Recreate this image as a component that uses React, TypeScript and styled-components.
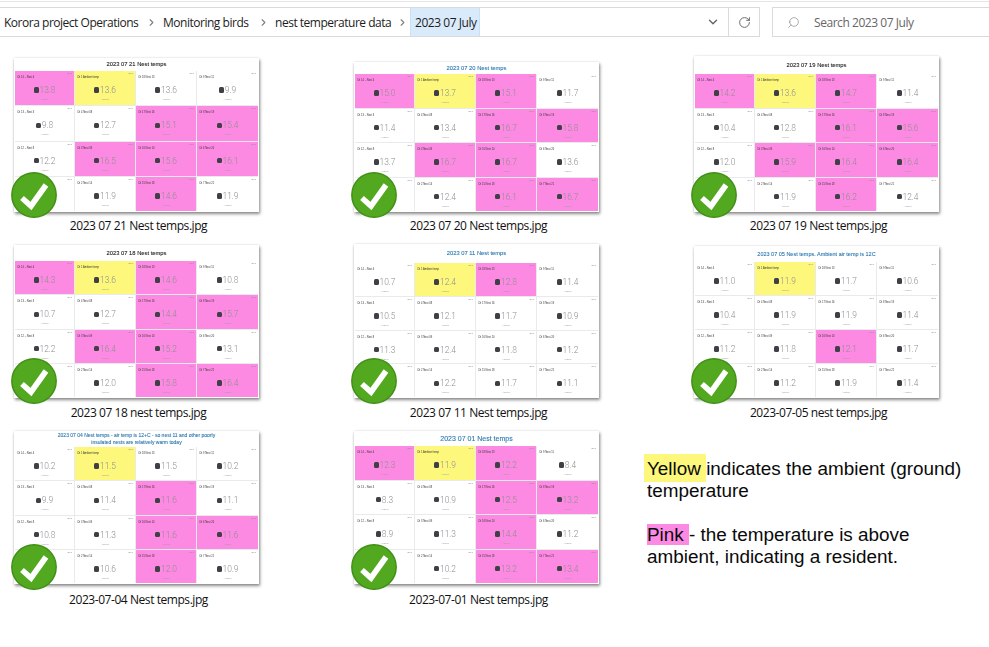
import React from "react";
import styled, { createGlobalStyle } from "styled-components";
import { ChevronDown, ChevronRight, RotateCw, Search } from "lucide-react";

const Global = createGlobalStyle`
  html, body { margin: 0; padding: 0; background: #fff; }
  body { width: 989px; height: 647px; overflow: hidden; font-family: "Open Sans", "Liberation Sans", sans-serif; }
`;

const Page = styled.div`
  width: 989px;
  height: 647px;
  background: #fff;
`;

const Header = styled.header`
  display: flex;
  height: 30px;
  margin-top: 1px;
  padding-top: 5px;
  border-top: 1px solid #e6e6e6;
`;

const AddressBar = styled.div`
  display: flex;
  align-items: stretch;
  width: 760px;
  box-sizing: border-box;
  border: 1px solid #dadada;
  border-left: 0;
`;

const Crumbs = styled.nav`
  display: flex;
  align-items: center;
  flex: 1;
  padding-left: 4px;
`;

const Crumb = styled.span<{ $w: number }>`
  width: ${(p) => p.$w}px;
  font-size: 12px;
  letter-spacing: -0.48px;
  color: #1c1c1c;
  white-space: nowrap;
`;

const Sep = styled.span`
  display: flex;
  justify-content: center;
  width: 23px;
  color: #7f7f7f;
`;

const CurrentCrumb = styled.span`
  display: flex;
  align-items: center;
  align-self: stretch;
  box-sizing: border-box;
  width: 70px;
  margin-left: -4px;
  padding-left: 4px;
  font-size: 12px;
  letter-spacing: -0.45px;
  color: #1c1c1c;
  white-space: nowrap;
  background: #d9ebfb;
  border: 1px solid #c6e2f8;
  border-width: 0 1px;
`;

const DropButton = styled.span`
  display: flex;
  align-items: center;
  justify-content: center;
  width: 30px;
  color: #666;
`;

const RefreshButton = styled.span`
  display: flex;
  align-items: center;
  justify-content: center;
  width: 30px;
  color: #6a6a6a;
  border-left: 1px solid #dadada;
`;

const SearchBox = styled.div`
  display: flex;
  align-items: center;
  flex: 1;
  margin-left: 12px;
  padding-left: 14px;
  border: 1px solid #dadada;
  border-right: 0;
  font-size: 12px;
  letter-spacing: -0.45px;
  color: #666;
`;

const SearchGlyph = styled.span`
  display: flex;
  width: 27px;
  color: #777;
  transform: scaleX(-1);
  justify-content: flex-end;
`;

const Gallery = styled.main`
  display: grid;
  grid-template-columns: repeat(3, 340px);
  grid-auto-rows: 187px;
  padding: 10px 0 0 14px;
`;

const Item = styled.figure`
  display: flex;
  flex-direction: column;
  justify-content: flex-end;
  width: 245px;
  margin: 0;
`;

const Thumb = styled.div<{ $h: number }>`
  position: relative;
  display: flex;
  flex-direction: column;
  height: ${(p) => p.$h}px;
  background: #fff;
  box-shadow: 1px 2px 3px rgba(0, 0, 0, 0.45), 0 0 2px rgba(0, 0, 0, 0.12);
`;

const Sheet = styled.div`
  display: flex;
  flex-direction: column;
  height: 100%;
  filter: blur(0.35px);
`;

const Title = styled.div<{ $h: number; $size: number; $blue: boolean }>`
  display: flex;
  align-items: center;
  justify-content: center;
  flex: 0 0 ${(p) => p.$h}px;
  padding: 0 42px;
  text-align: center;
  font: 400 ${(p) => p.$size}px/7px "Liberation Sans", sans-serif;
  color: ${(p) => (p.$blue ? "#2b78b0" : "#222")};
  -webkit-text-stroke: 0.1px currentColor;
  white-space: ${(p) => (p.$size < 5.2 ? "normal" : "nowrap")};
`;

const CellGrid = styled.div`
  flex: 1;
  display: grid;
  grid-template-columns: 58fr 59fr 59fr 60fr;
  grid-template-rows: repeat(4, 1fr);
  gap: 1px;
  margin: 0 1px 1px;
  background: #e9eaec;
`;

const Cell = styled.div<{ $tone: string }>`
  position: relative;
  display: flex;
  flex-direction: column;
  align-items: center;
  min-width: 0;
  background: ${(p) => (p.$tone === "p" ? "#fd8ae2" : p.$tone === "y" ? "#fdf77c" : "#fff")};
`;

const CellName = styled.span`
  align-self: flex-start;
  margin: 5px 0 0 2px;
  font: 400 2.6px/4px "Liberation Sans", sans-serif;
  color: #333;
  white-space: nowrap;
`;

const CellMeta = styled.span`
  position: absolute;
  top: 1px;
  right: 2px;
  font: 400 2.5px/3px "Liberation Sans", sans-serif;
  color: #888;
`;

const Reading = styled.div`
  display: flex;
  align-items: center;
  gap: 0.5px;
  margin-top: 4px;
  font: 300 8.4px/12px Roboto, sans-serif;
  color: #8f8f8f;
`;

const Sensor = styled.i`
  width: 5.5px;
  height: 5.5px;
  border-radius: 1.5px;
  background: #3f3f46;
`;

const Caption = styled.span`
  margin-top: 2px;
  font: 400 2.5px/4px "Liberation Sans", sans-serif;
  color: #999;
`;

const Check = styled.svg`
  position: absolute;
  left: -3px;
  bottom: -6px;
  width: 46px;
  height: 46px;
`;

const Label = styled.figcaption<{ $gap: number }>`
  margin-top: ${(p) => p.$gap}px;
  height: 16px;
  padding-left: 4px;
  font-size: 12px;
  line-height: 16px;
  letter-spacing: -0.44px;
  text-align: center;
  color: #111;
  white-space: nowrap;
`;

const Legend = styled.aside`
  align-self: start;
  width: 322px;
  margin: 37px 0 0 -47px;
  font: 400 18.9px/22px "Liberation Sans", sans-serif;
  color: #0a0a0a;
`;

const LegendPara = styled.p`
  margin: 0 0 22px;
`;

const YellowMark = styled.span`
  padding: 4px 0 3px 3px;
  margin-left: -3px;
  background: #fdf77c;
`;

const PinkMark = styled.span`
  background: #fd8ae2;
`;

const names = [
  "Ch 14 – Nest 4", "Ch 1 Ambient temp", "Ch 18 Nest 13", "Ch 9 Nest 11",
  "Ch 13 – Nest 3", "Ch 4 Nest 08", "Ch 17 Nest 16", "Ch 8 Nest 19",
  "Ch 12 – Nest 8", "Ch 3 Nest 09", "Ch 16 Nest 10", "Ch 6 Nest 20",
  "Ch 11 – Nest 7", "Ch 2 Nest 14", "Ch 15 Nest 18", "Ch 7 Nest 21",
];

type Card = {
  title: string;
  label: string;
  h: number;
  titleH: number;
  size: number;
  blue: boolean;
  gap: number;
  data: string;
};

const cards: Card[] = [
  { title: "2023 07 21 Nest temps", label: "2023 07 21 Nest temps.jpg", h: 154, titleH: 13, size: 5.8, blue: false, gap: 6,
    data: "13.8p 13.6y 13.6 9.9 9.8 12.7 15.1p 15.4p 12.2 16.5p 15.6p 16.1p 11.0 11.9 14.6p 11.9" },
  { title: "2023 07 20 Nest temps", label: "2023 07 20 Nest temps.jpg", h: 150, titleH: 12, size: 5.8, blue: true, gap: 6,
    data: "15.0p 13.7y 15.1p 11.7 11.4 13.4 16.7p 15.8p 13.7 16.7p 16.7p 13.6 11.0 12.4 16.1p 16.7p" },
  { title: "2023 07 19 Nest temps", label: "2023 07 19 Nest temps.jpg", h: 156, titleH: 18, size: 5.8, blue: false, gap: 6,
    data: "14.2p 13.6y 14.7p 11.4 10.4 12.8 16.1p 15.6p 12.0 15.9p 16.4p 16.4p 11.0 11.9 16.2p 12.4" },
  { title: "2023 07 18 Nest temps", label: "2023 07 18 nest temps.jpg", h: 153, titleH: 16, size: 5.8, blue: false, gap: 7,
    data: "14.3p 13.6y 14.6p 10.8 10.7 12.7 14.4p 15.7p 12.2 16.4p 15.2p 13.1 11.0 12.0 15.8p 16.4p" },
  { title: "2023 07 11 Nest temps", label: "2023 07 11 Nest temps.jpg", h: 154, titleH: 19, size: 5.8, blue: true, gap: 7,
    data: "10.7 12.4y 12.8p 11.4 10.5 12.1 11.7 10.9 11.3 12.4 11.8 11.2 11.0 12.2 11.7 11.1" },
  { title: "2023 07 05 Nest temps. Ambient air temp is 12C", label: "2023-07-05 nest temps.jpg", h: 152, titleH: 16, size: 5.5, blue: true, gap: 7,
    data: "11.0 11.9y 11.7 10.6 10.4 11.9 11.9 11.4 11.2 11.8 12.1p 11.7 11.0 11.2 11.9 11.4" },
  { title: "2023 07 04 Nest temps - air temp is 12+C - so nest 11 and other poorly insulated nests are relatively warm today", label: "2023-07-04 Nest temps.jpg", h: 153, titleH: 16, size: 5, blue: true, gap: 8,
    data: "10.2 11.5y 11.5 10.2 9.9 11.4 11.6p 11.1 10.8 11.3 11.6p 11.6p 11.0 10.6 12.0p 10.9" },
  { title: "2023 07 01 Nest temps", label: "2023-07-01 Nest temps.jpg", h: 153, titleH: 15, size: 7, blue: true, gap: 8,
    data: "12.3p 11.9y 12.2p 8.4 8.3 10.9 12.5p 13.2p 8.9 11.3 14.4p 11.2 11.0 10.2 13.2p 13.4p" },
];

const CheckBadge = () => (
  <Check viewBox="0 0 46 46" aria-hidden="true">
    <circle cx="23" cy="23" r="22.2" fill="#52a81f" stroke="#3f8f14" strokeWidth="1.4" />
    <path d="M11 26 L20 34 L35 13" fill="none" stroke="#fff" strokeWidth="5.6" strokeLinejoin="miter" />
  </Check>
);

const Thumbnail = ({ card }: { card: Card }) => (
  <Item>
    <Thumb $h={card.h}>
      <Sheet>
        <Title $h={card.titleH} $size={card.size} $blue={card.blue}>{card.title}</Title>
        <CellGrid>
          {card.data.split(" ").map((v, i) => {
            const tone = /[py]$/.test(v) ? v.slice(-1) : "";
            return (
              <Cell key={i} $tone={tone}>
                <CellName>{names[i]}</CellName>
                <CellMeta>3s ≡</CellMeta>
                <Reading><Sensor />{v.replace(/[py]$/, "")}</Reading>
                <Caption>Analog</Caption>
              </Cell>
            );
          })}
        </CellGrid>
      </Sheet>
      <CheckBadge />
    </Thumb>
    <Label $gap={card.gap}>{card.label}</Label>
  </Item>
);

export default function App() {
  return (
    <Page>
      <Global />
      <Header>
        <AddressBar>
          <Crumbs>
            <Crumb $w={136}>Korora project Operations</Crumb>
            <Sep><ChevronRight size={11} strokeWidth={2.4} /></Sep>
            <Crumb $w={89}>Monitoring birds</Crumb>
            <Sep><ChevronRight size={11} strokeWidth={2.4} /></Sep>
            <Crumb $w={116}>nest temperature data</Crumb>
            <Sep><ChevronRight size={11} strokeWidth={2.4} /></Sep>
            <CurrentCrumb>2023 07 July</CurrentCrumb>
          </Crumbs>
          <DropButton><ChevronDown size={14} strokeWidth={2.4} /></DropButton>
          <RefreshButton><RotateCw size={13} strokeWidth={1.8} /></RefreshButton>
        </AddressBar>
        <SearchBox>
          <SearchGlyph><Search size={13} strokeWidth={1.1} /></SearchGlyph>
          Search 2023 07 July
        </SearchBox>
      </Header>
      <Gallery>
        {cards.map((c) => <Thumbnail key={c.title} card={c} />)}
        <Legend>
          <LegendPara><YellowMark>Yellow </YellowMark>indicates the ambient (ground) temperature</LegendPara>
          <LegendPara><PinkMark>Pink </PinkMark>- the temperature is above ambient, indicating a resident.</LegendPara>
        </Legend>
      </Gallery>
    </Page>
  );
}
